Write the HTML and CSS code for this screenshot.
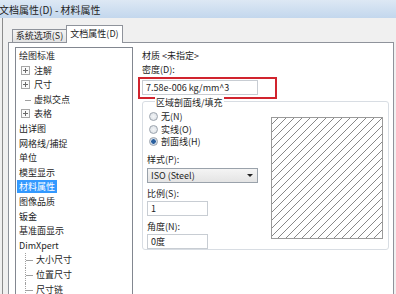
FILE: index.html
```html
<!DOCTYPE html>
<html lang="zh-CN">
<head>
    <meta charset="UTF-8">
    <title>文档属性(D) - 材料属性</title>
    <link rel="stylesheet" href="styles.css">
</head>
<body>

    <div class="titlebar">文档属性(D) - 材料属性</div>

    <div class="client">
        <div class="tabs">
            <div class="tab">系统选项(S)</div>
            <div class="tab active">文档属性(D)</div>
        </div>

        <div class="panel">
            <ul class="tree">
                <li class="lv0">绘图标准</li>
                <li class="lv1"><span class="exp"></span>注解</li>
                <li class="lv1"><span class="exp"></span>尺寸</li>
                <li class="lv1 leaf"><span class="stub"></span>虚拟交点</li>
                <li class="lv1"><span class="exp"></span>表格</li>
                <li class="lv0">出详图</li>
                <li class="lv0">网格线/捕捉</li>
                <li class="lv0">单位</li>
                <li class="lv0">模型显示</li>
                <li class="lv0"><span class="sel">材料属性</span></li>
                <li class="lv0">图像品质</li>
                <li class="lv0">钣金</li>
                <li class="lv0">基准面显示</li>
                <li class="lv0">DimXpert</li>
                <li class="lv1 leaf line"><span class="stub"></span>大小尺寸</li>
                <li class="lv1 leaf line"><span class="stub"></span>位置尺寸</li>
                <li class="lv1 leaf line"><span class="stub"></span>尺寸链</li>
            </ul>

            <div class="props">
                <div class="label first">材质 &lt;未指定&gt;</div>
                <div class="label">密度(D):</div>
                <div class="mark">
                    <div class="field wide">7.58e-006 kg/mm^3</div>
                </div>

                <div class="group">
                    <div class="group-title">区域剖面线/填充</div>
                    <div class="group-body">
                        <div class="col">
                            <div class="radio"><span class="dot"></span>无(N)</div>
                            <div class="radio"><span class="dot"></span>实线(O)</div>
                            <div class="radio"><span class="dot on"></span>剖面线(H)</div>

                            <div class="label small">样式(P):</div>
                            <div class="select">ISO (Steel)<span class="arrow"></span></div>

                            <div class="label small">比例(S):</div>
                            <div class="field short">1</div>

                            <div class="label small">角度(N):</div>
                            <div class="field short">0度</div>
                        </div>

                        <svg class="hatch" width="112" height="122" viewBox="0 0 112 122">
                            <defs>
                                <pattern id="lines" width="8" height="8" patternUnits="userSpaceOnUse">
                                    <path d="M-1,1 l2,-2 M0,8 l8,-8 M7,9 l2,-2" stroke="#7a7a7a" stroke-width="0.9"/>
                                </pattern>
                            </defs>
                            <rect x="0.5" y="0.5" width="111" height="121" fill="url(#lines)" stroke="#9a9a9a"/>
                        </svg>
                    </div>
                </div>
            </div>
        </div>
    </div>

</body>
</html>
```

FILE: styles.css
```css
body {
    margin: 0;
    width: 396px;
    height: 294px;
    overflow: hidden;
    background-color: #f0f0f0;
    font-family: "Noto Sans CJK SC", "Liberation Sans", sans-serif;
    font-size: 9px;
    color: #1e1e1e;
}
.titlebar {
    height: 18px;
    line-height: 19px;
    text-indent: -1px;
    font-size: 10px;
    background: linear-gradient(#dde8f4, #c3d7ed);
    color: #222;
}
.client {
    margin-left: 2px;
    height: 276px;
    border-left: 1px solid #8c8c8c;
    padding: 7px 2px 0 5px;
}
.tabs {
    display: flex;
    align-items: flex-end;
    height: 17px;
    padding-left: 4px;
}
.tab {
    width: 53px;
    height: 12px;
    line-height: 12px;
    text-align: center;
    border: 1px solid #8f939b;
    border-bottom: none;
    background: linear-gradient(#f3f3f3, #e3e3e3);
}
.tab.active {
    position: relative;
    z-index: 1;
    width: 55px;
    height: 17px;
    line-height: 15px;
    margin-bottom: -1px;
    margin-left: -1px;
    background: #fff;
}
.panel {
    display: flex;
    height: 248px;
    border: 1px solid #8f939b;
    border-bottom-color: #555;
    background: #fff;
    padding: 4px 0 0 6px;
    overflow: hidden;
}
.tree {
    list-style: none;
    margin: 0;
    padding: 1px 0 0 0;
    width: 116px;
    flex: none;
    border: 1px solid #828790;
    border-bottom: none;
    height: 260px;
}
.tree li {
    height: 14.6px;
    line-height: 14.6px;
    white-space: nowrap;
}
.lv0 {
    padding-left: 3px;
}
.lv1 {
    padding-left: 5px;
}
.line {
    margin-left: 9px;
    padding-left: 0;
    border-left: 1px dotted #a0a0a0;
}
.exp {
    display: inline-block;
    width: 7px;
    height: 7px;
    border: 1px solid #a6a6a6;
    margin-right: 4px;
    vertical-align: -1px;
    background:
        linear-gradient(#6a6a6a, #6a6a6a) center / 5px 1px no-repeat,
        linear-gradient(#6a6a6a, #6a6a6a) center / 1px 5px no-repeat,
        #fafafa;
}
.stub {
    display: inline-block;
    width: 6px;
    height: 1px;
    margin: 0 3px 0 4px;
    background: #a0a0a0;
    vertical-align: middle;
}
.line .stub {
    margin-left: 0;
    width: 7px;
}
.sel {
    display: inline-block;
    margin-left: -2px;
    padding: 0 2px;
    line-height: 13px;
    background: #3399ff;
    color: #fff;
}
.props {
    margin-left: 5px;
    width: 251px;
}
.label {
    line-height: 14px;
    padding-left: 4px;
}
.label.first {
    margin-top: 2px;
}
.label.small {
    padding-left: 0;
    line-height: 13px;
    margin-top: 4px;
}
.mark {
    width: 133px;
    border: 2px solid #d1242e;
    padding: 1px 0 2px 2px;
}
.field {
    height: 13px;
    line-height: 13px;
    border: 1px solid #c8cdd3;
    padding-left: 3px;
    background: #fff;
}
.field.wide {
    width: 111px;
}
.field.short {
    width: 56px;
    margin-top: 1px;
}
.group {
    margin: 2px 0 0 4px;
    height: 147px;
    border: 1px solid #d8dde3;
    border-radius: 3px;
}
.group-title {
    display: table;
    margin: -5px 0 0 12px;
    padding: 0 1px;
    line-height: 12px;
    background: #fff;
}
.group-body {
    display: flex;
    justify-content: space-between;
    padding: 0 5px 0 4px;
}
.col {
    width: 111px;
    padding-top: 2px;
}
.radio {
    height: 12.5px;
    line-height: 12.5px;
    padding-left: 2px;
}
.dot {
    display: inline-block;
    width: 7px;
    height: 7px;
    border: 1px solid #9ba3ad;
    border-radius: 50%;
    margin-right: 3px;
    vertical-align: -1px;
    background: radial-gradient(circle, #f4f6f8, #d7dce2);
}
.dot.on {
    background: radial-gradient(circle, #2a5f9e 0 2px, #c9d6e6 2.5px, #e8ecf1);
}
.select {
    display: flex;
    justify-content: space-between;
    align-items: center;
    width: 106px;
    height: 13px;
    line-height: 13px;
    padding-left: 3px;
    margin-top: 2px;
    border: 1px solid #9aa2ab;
    background: linear-gradient(#f4f4f4, #e4e4e4);
}
.arrow {
    width: 0;
    height: 0;
    margin-right: 4px;
    border-left: 3px solid transparent;
    border-right: 3px solid transparent;
    border-top: 3px solid #222;
}
.hatch {
    display: block;
    margin-top: 8px;
}
```
